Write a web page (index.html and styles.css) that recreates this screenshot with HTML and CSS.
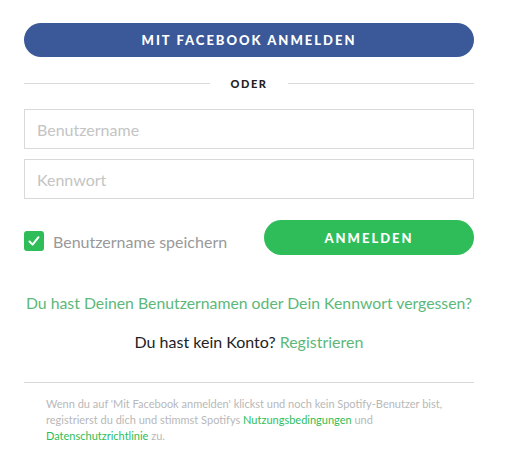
FILE: index.html
```html
<!DOCTYPE html>
<html lang="de">
<head>
  <meta charset="UTF-8" />
  <meta name="viewport" content="width=device-width, initial-scale=1.0" />
  <title>Anmelden</title>
  <link rel="stylesheet" href="styles.css">
</head>
<body>
  <div class="login">
    <button class="btn btn-fb">Mit Facebook anmelden</button>

    <div class="divider"><span>oder</span></div>

    <input class="field" type="text" placeholder="Benutzername">
    <input class="field" type="password" placeholder="Kennwort">

    <div class="row">
      <label class="remember">
        <span class="check">
          <svg width="14" height="14" viewBox="0 0 14 14"><path d="M2.5 7.5 L5.6 10.6 L11.5 3.2" fill="none" stroke="#fff" stroke-width="2" stroke-linecap="round" stroke-linejoin="round"/></svg>
        </span>
        Benutzername speichern
      </label>
      <button class="btn btn-login">Anmelden</button>
    </div>

    <p class="forgot"><a href="#">Du hast Deinen Benutzernamen oder Dein Kennwort vergessen?</a></p>
    <p class="signup">Du hast kein Konto? <a href="#">Registrieren</a></p>

    <div class="legal">
      Wenn du auf 'Mit Facebook anmelden' klickst und noch kein Spotify-Benutzer bist,
      registrierst du dich und stimmst Spotifys <a href="#">Nutzungsbedingungen</a> und
      <a href="#">Datenschutzrichtlinie</a> zu.
    </div>
  </div>
</body>
</html>
```

FILE: styles.css
```css
html, body {
  margin: 0;
  padding: 0;
  background: #fff;
  font-family: 'Lato', sans-serif;
  color: #222;
}
.login {
  width: 450px;
  margin: 0 0 0 24px;
  padding-top: 23px;
}
.btn {
  border: none;
  border-radius: 500px;
  color: #fff;
  font-family: 'Lato', sans-serif;
  font-weight: 900;
  text-transform: uppercase;
  letter-spacing: 2px;
  font-size: 13px;
  cursor: pointer;
}
.btn-fb {
  display: block;
  width: 100%;
  height: 34px;
  background: #3b5998;
}
.divider {
  display: flex;
  align-items: center;
  gap: 20px;
  margin: 20px 0 19px;
  font-size: 11px;
  font-weight: 900;
  letter-spacing: 1.6px;
  text-transform: uppercase;
  color: #222;
}
.divider::before, .divider::after {
  content: '';
  flex: 1;
  height: 1px;
  background: #d9d9d9;
}
.field {
  display: block;
  box-sizing: border-box;
  width: 100%;
  height: 40px;
  margin-bottom: 10px;
  padding: 0 12px;
  border: 1px solid #d9d9d9;
  font-family: 'Lato', sans-serif;
  font-size: 16px;
  color: #222;
}
.field::placeholder {
  color: #c4c4c4;
}
.row {
  display: flex;
  align-items: center;
  justify-content: space-between;
  margin-top: 21px;
}
.remember {
  display: flex;
  align-items: center;
  gap: 9px;
  margin-top: 7px;
  font-size: 16px;
  color: #999;
}
.check {
  display: flex;
  align-items: center;
  justify-content: center;
  width: 20px;
  height: 20px;
  border-radius: 3px;
  background: #2ebd59;
}
.btn-login {
  width: 210px;
  height: 35px;
  background: #2ebd59;
}
a {
  color: #5cb87a;
  text-decoration: none;
}
.forgot {
  margin: 38px 0 0;
  text-align: center;
  font-size: 15.8px;
  white-space: nowrap;
}
.signup {
  margin: 20px 0 0;
  text-align: center;
  font-size: 16px;
  color: #222;
}
.legal {
  margin-top: 31px;
  border-top: 1px solid #d9d9d9;
  padding: 13px 20px 0 22px;
  font-size: 11px;
  line-height: 16px;
  color: #b8b8b8;
}
.legal a {
  color: #2ebd59;
}
```
